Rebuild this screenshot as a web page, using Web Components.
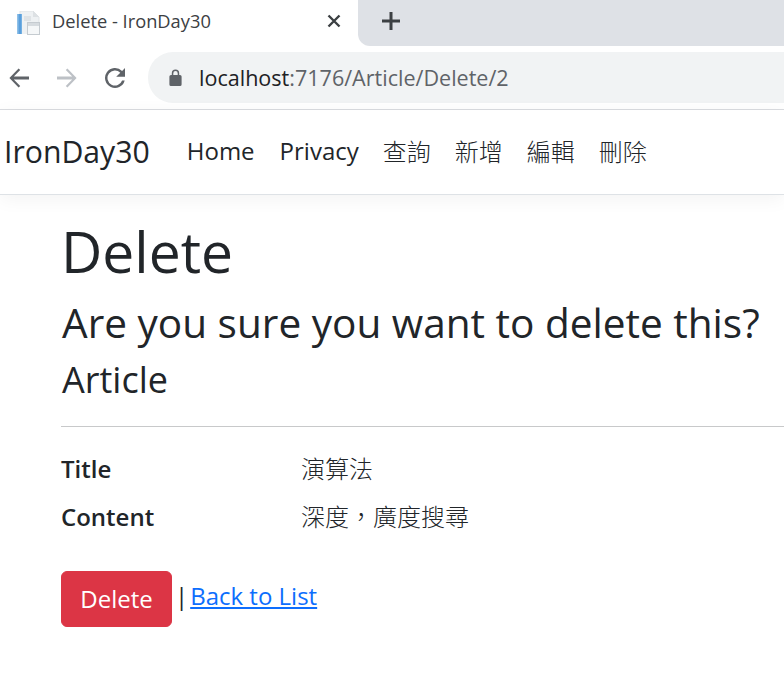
<!DOCTYPE html>
<html lang="zh-Hant">
<head>
<meta charset="utf-8">
<title>Delete - IronDay30</title>
<style>
  html, body { margin: 0; height: 100%; background: #fff; overflow: hidden; }
  body { font-family: "Open Sans", "Noto Sans CJK TC", sans-serif; color: #212529; }
</style>
</head>
<body>
<browser-chrome></browser-chrome>
<site-navbar>
  <a slot="links" href="#">Home</a>
  <a slot="links" href="#">Privacy</a>
  <a slot="links" class="cjk" href="#">查詢</a>
  <a slot="links" class="cjk" href="#">新增</a>
  <a slot="links" class="cjk" href="#">編輯</a>
  <a slot="links" class="cjk" href="#">刪除</a>
</site-navbar>
<delete-page>
  <detail-row label="Title">演算法</detail-row>
  <detail-row label="Content">深度，廣度搜尋</detail-row>
</delete-page>

<script>
class BrowserChrome extends HTMLElement {
  connectedCallback() {
    this.attachShadow({ mode: 'open' });
    this.shadowRoot.innerHTML = `
      <style>
        :host {
          display: block;
          height: 110px;
          box-sizing: border-box;
          border-bottom: 1px solid #dadce0;
          font-family: "Open Sans", "Noto Sans", sans-serif;
        }
        .tabs { display: flex; height: 46px; }
        .tab {
          width: 358px;
          display: flex;
          align-items: center;
          box-sizing: border-box;
          padding: 0 0 5px 16px;
          font-size: 18.3px;
          color: #3c4043;
        }
        .tab svg.favicon { flex: none; margin: 5px 12px 0 0; }
        .tab span { flex: 1; }
        .tab svg.close { margin-right: 16px; }
        .strip {
          flex: 1;
          display: flex;
          align-items: center;
          background: #dee1e6;
          border-bottom-left-radius: 12px;
          padding: 0 0 5px 22px;
        }
        .toolbar { display: flex; align-items: center; height: 63px; box-sizing: border-box; }
        .toolbar .btn { flex: none; width: 24px; height: 24px; }
        .back { margin-left: 7px; }
        .fwd { margin-left: 24px; }
        .reload { margin-left: 24px; }
        .omni {
          flex: 1;
          height: 51px;
          margin: -1px 0 0 21px;
          background: #f1f3f4;
          border-radius: 25px 0 0 25px;
          display: flex;
          align-items: center;
          padding-left: 21px;
          font-size: 21.55px;
          color: #5f6368;
        }
        .omni svg { margin-right: 17px; flex: none; }
        .omni b { font-weight: 400; color: #202124; }
      </style>
      <div class="tabs">
        <div class="tab">
          <svg class="favicon" width="24" height="24" viewBox="0 0 24 24">
            <path d="M4 0h13l6 6v8H4z" fill="#eef1f3" stroke="#dfe3e6"/>
            <path d="M17 0v6h6z" fill="#dde1e4"/>
            <rect x="1" y="3" width="5" height="20" fill="#8fc0e8"/>
            <rect x="2.500" y="3" width="3" height="20" fill="#5a9fdc"/>
            <rect x="8" y="5" width="7" height="5" fill="#dfe3e6"/>
            <rect x="6" y="12" width="5" height="11" fill="#eef1f3"/>
            <rect x="11.500" y="11.500" width="12" height="12" fill="#f5f7f8" stroke="#c5cbd0"/>
            <rect x="12" y="12" width="11" height="3" fill="#d6dbdf"/>
          </svg>
          <span>Delete - IronDay30</span>
          <svg class="close" width="16" height="16" viewBox="0 0 16 16" fill="none" stroke="#3c4043" stroke-width="2.4">
            <path d="M2.500 2.500l11 11M13.500 2.500l-11 11"/>
          </svg>
        </div>
        <div class="strip">
          <svg width="22" height="22" viewBox="0 0 22 22" fill="none" stroke="#3c4043" stroke-width="3">
            <path d="M11 2v18M2 11h18"/>
          </svg>
        </div>
      </div>
      <div class="toolbar">
        <svg class="btn back" viewBox="0 0 24 24" fill="#5f6368"><path d="M22 10.500H6.800l6.400-6.400L11.600 2.500 2.400 12l9.200 9.500 1.600-1.600-6.400-6.400H22z"/></svg>
        <svg class="btn fwd" viewBox="0 0 24 24" fill="#bdc1c6"><path d="M2 10.500h15.200l-6.400-6.400 1.600-1.600 9.200 9.500-9.200 9.500-1.600-1.600 6.400-6.400H2z"/></svg>
        <svg class="btn reload" viewBox="0 0 24 24" fill="#5f6368"><path d="M19.100 4.900A10 10 0 1 0 21.700 14.500h-2.600a7.500 7.500 0 1 1-1.800-7.800L13.200 10.800H22V2z"/></svg>
        <div class="omni">
          <svg width="13" height="17" viewBox="0 0 13 17" fill="#5f6368">
            <path d="M11 6h-.8V4.300a3.700 3.700 0 0 0-7.400 0V6H2a1.600 1.600 0 0 0-1.600 1.600v7.800A1.600 1.600 0 0 0 2 17h9a1.600 1.600 0 0 0 1.600-1.600V7.600A1.600 1.600 0 0 0 11 6zM4.300 4.300a2.200 2.200 0 0 1 4.400 0V6H4.300z"/>
          </svg>
          <div><b>localhost</b>:7176/Article/Delete/2</div>
        </div>
      </div>
    `;
  }
}

class SiteNavbar extends HTMLElement {
  connectedCallback() {
    this.attachShadow({ mode: 'open' });
    this.shadowRoot.innerHTML = `
      <style>
        :host {
          display: flex;
          align-items: center;
          height: 85px;
          box-sizing: border-box;
          padding: 0 0 2px 4px;
          border-bottom: 1px solid #dee2e6;
          box-shadow: 0 4px 18px rgba(0, 0, 0, 0.05);
          position: relative;
          color: #212529;
        }
        .brand { font-size: 30.2px; margin-right: 37px; }
        nav { display: flex; gap: 24px; font-size: 24px; }
        ::slotted(a) { color: inherit; text-decoration: none; }
        ::slotted(a:first-child) { margin-right: 1px; }
        ::slotted(a.cjk) { font-weight: 300; position: relative; top: -1px; }
      </style>
      <div class="brand">IronDay30</div>
      <nav><slot name="links"></slot></nav>
    `;
  }
}

class DetailRow extends HTMLElement {
  connectedCallback() {
    this.attachShadow({ mode: 'open' });
    this.shadowRoot.innerHTML = `
      <style>
        :host { display: flex; font-size: 24px; line-height: 36px; margin-bottom: 12px; }
        dt { width: 240px; font-weight: 600; }
        dd { margin: 0; font-weight: 300; }
      </style>
      <dt>${this.getAttribute('label')}</dt>
      <dd><slot></slot></dd>
    `;
  }
}

class DeletePage extends HTMLElement {
  connectedCallback() {
    this.attachShadow({ mode: 'open' });
    this.shadowRoot.innerHTML = `
      <style>
        :host { display: block; padding: 20px 0 0 61px; color: #212529; }
        h1, h3, h4 { margin: 0; font-weight: 400; }
        h1 { font-size: 57px; line-height: 72px; margin-bottom: 11px; }
        h3 { font-size: 40.55px; line-height: 50px; margin: 0 0 10px 1px; white-space: nowrap; }
        h4 { font-size: 36px; line-height: 44px; margin-left: 1px; }
        hr { border: 0; border-top: 1px solid #c8c9ca; margin: 24px 0; }
        dl { margin: 0 0 36px; }
        .actions { display: flex; align-items: flex-start; font-size: 24px; line-height: 36px; }
        button {
          font: inherit;
          color: #fff;
          background: #dc3545;
          border: 1px solid #dc3545;
          border-radius: 6px;
          padding: 9px 18px;
          margin-right: 3px;
          width: 111px;
        }
        .sep { margin: 7px 2px 0 0; }
        a { color: #0d6efd; margin-top: 7px; }
      </style>
      <h1>Delete</h1>
      <h3>Are you sure you want to delete this?</h3>
      <h4>Article</h4>
      <hr>
      <dl><slot></slot></dl>
      <div class="actions">
        <button type="button">Delete</button>
        <span class="sep">|</span>
        <a href="#">Back to List</a>
      </div>
    `;
  }
}

customElements.define('browser-chrome', BrowserChrome);
customElements.define('site-navbar', SiteNavbar);
customElements.define('detail-row', DetailRow);
customElements.define('delete-page', DeletePage);
</script>
</body>
</html>
